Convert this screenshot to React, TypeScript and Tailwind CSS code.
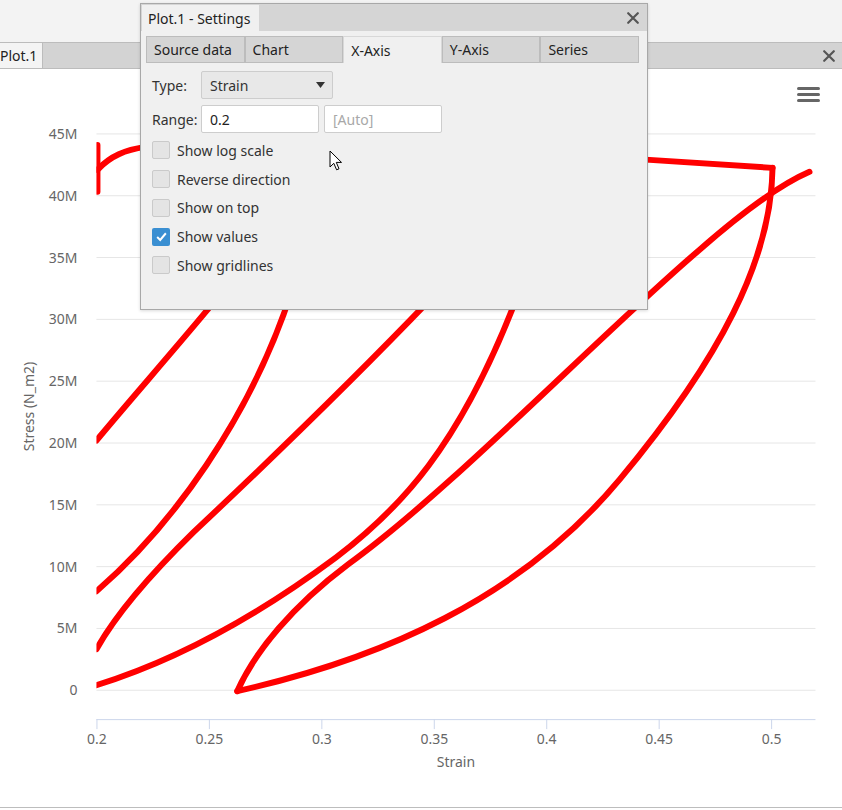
const curves = [
  // left-most lines rising out from the y axis
  "M96 441 C 130 400, 170 355, 214 302",
  "M96 592 C 170 528, 250 420, 292 290",
  "M96 650 C 110 625, 140 585, 193 533 C 260 470, 360 373, 430 300",
  "M96 686 C 180 660, 258 616, 336 558 C 398 511, 460 448, 518 295",
  // from the cusp up to the right end
  "M237 692 C 255 652, 292 607, 348 565 C 452 490, 600 335, 700 250 C 740 215, 780 185, 810 172",
  // top band and its return to the cusp
  "M97 170 C 110 156, 125 150, 145 147 C 300 138, 500 155, 650 160 L 773 168",
  "M773 168 C 772 260, 720 360, 620 480 C 520 600, 380 660, 237 692",
];

const yTicks = ["45M", "40M", "35M", "30M", "25M", "20M", "15M", "10M", "5M", "0"];
const xTicks = ["0.2", "0.25", "0.3", "0.35", "0.4", "0.45", "0.5"];

const Chart = () => (
  <svg className="block h-full w-full" viewBox="0 69 842 739">
    <defs>
      <clipPath id="plot">
        <rect x={96} y={69} width={730} height={651} />
      </clipPath>
    </defs>
    {yTicks.map((t, i) => {
      const y = 134 + i * 61.9;
      return (
        <g key={t}>
          <line x1={96} x2={816} y1={y} y2={y} stroke="#e6e6e6" strokeWidth={1} />
          <text x={77} y={y + 5} textAnchor="end" fontSize={14} fill="#666">
            {t}
          </text>
        </g>
      );
    })}
    <line x1={96} x2={816} y1={720.5} y2={720.5} stroke="#ccd6eb" strokeWidth={1} />
    {xTicks.map((t, i) => {
      const x = 96.5 + i * 112.6;
      return (
        <g key={t}>
          <line x1={x} x2={x} y1={720} y2={730} stroke="#ccd6eb" strokeWidth={1} />
          <text x={x} y={745} textAnchor="middle" fontSize={14} fill="#666">
            {t}
          </text>
        </g>
      );
    })}
    <text x={456} y={768} textAnchor="middle" fontSize={14} fill="#666">
      Strain
    </text>
    <text
      x={0}
      y={0}
      transform="translate(33 407) rotate(-90)"
      textAnchor="middle"
      fontSize={14}
      fill="#666"
    >
      Stress (N_m2)
    </text>
    <g clipPath="url(#plot)" fill="none" stroke="#f00" strokeWidth={6} strokeLinecap="round" strokeLinejoin="miter">
      <line x1={97} y1={145} x2={97} y2={192} />
      {curves.map((d, i) => (
        <path key={i} d={d} />
      ))}
    </g>
  </svg>
);

const Close = ({ size = 11 }: { size?: number }) => (
  <svg width={size} height={size} viewBox="0 0 10 10" className="block">
    <path d="M1 1 L9 9 M9 1 L1 9" stroke="#555" strokeWidth={1.8} strokeLinecap="round" />
  </svg>
);

const Check = ({ label, checked = false }: { label: string; checked?: boolean }) => (
  <div className="flex h-[28.75px] items-center gap-[7px]">
    {checked ? (
      <span className="flex h-[18px] w-[18px] items-center justify-center rounded-[2px] bg-[#3a8fd2]">
        <svg width="13" height="13" viewBox="0 0 12 12">
          <path d="M2 6.5 L4.8 9.2 L10 3" fill="none" stroke="#fff" strokeWidth={1.8} />
        </svg>
      </span>
    ) : (
      <span className="h-[18px] w-[18px] rounded-[2px] border border-[#cacaca] bg-[#e4e4e4]" />
    )}
    <span className="text-[14px] text-[#333]">{label}</span>
  </div>
);

const tabs = ["Source data", "Chart", "X-Axis", "Y-Axis", "Series"];

const SettingsDialog = () => (
  <div className="absolute left-[140px] top-[3px] flex h-[307px] w-[508px] flex-col border border-[#a8a8a8] bg-[#f0f0f0] shadow-[0_1px_3px_rgba(0,0,0,0.15)]">
    <div className="flex h-[27px] items-stretch bg-[#d5d5d5]">
      <div className="ml-px mt-px flex w-[117px] items-center bg-[#f0f0f0] pl-[6px] text-[14px] text-[#222]">
        Plot.1 - Settings
      </div>
      <button className="ml-auto mr-[8px] flex items-center">
        <Close size={12} />
      </button>
    </div>
    <div className="mx-[5px] mt-[5px] flex h-[27px]">
      {tabs.map((t) => (
        <div
          key={t}
          className={
            t === "X-Axis"
              ? "flex w-[98.6px] items-center border border-b-0 border-[#d8d8d8] bg-[#f0f0f0] pl-[7px] text-[14px] text-[#222]"
              : "flex w-[98.6px] items-center border border-[#bcbcbc] bg-[#d5d5d5] pl-[7px] text-[14px] text-[#222]"
          }
        >
          {t}
        </div>
      ))}
    </div>
    <div className="px-[11px] pt-[8px]">
      <div className="flex h-[28px] items-center">
        <span className="w-[49px] text-[14px] text-[#333]">Type:</span>
        <div className="flex h-[28px] w-[132px] items-center justify-between rounded-[2px] border border-[#cdcdcd] bg-[#e8e8e8] pl-[8px] pr-[7px] text-[14px] text-[#333]">
          Strain
          <svg width="9" height="6" viewBox="0 0 9 6">
            <path d="M0 0 H9 L4.5 6 Z" fill="#333" />
          </svg>
        </div>
      </div>
      <div className="mt-[6px] flex h-[28px] items-center">
        <span className="w-[49px] text-[14px] text-[#333]">Range:</span>
        <div className="flex h-[28px] w-[118px] items-center rounded-[2px] border border-[#cdcdcd] bg-white px-[8px] text-[14px] text-[#222]">
          0.2
        </div>
        <div className="ml-[5px] flex h-[28px] w-[118px] items-center rounded-[2px] border border-[#cdcdcd] bg-white px-[8px] text-[14px] text-[#a8a8a8]">
          [Auto]
        </div>
      </div>
      <div className="mt-[3px] flex flex-col">
        <Check label="Show log scale" />
        <Check label="Reverse direction" />
        <Check label="Show on top" />
        <Check label="Show values" checked />
        <Check label="Show gridlines" />
      </div>
    </div>
  </div>
);

const Cursor = () => (
  <svg className="absolute left-[329px] top-[150px]" width="14" height="22" viewBox="0 0 14 22">
    <path
      d="M1 1 L1 17 L4.8 13.3 L7.6 19.8 L10 18.8 L7.3 12.4 L12.5 12.4 Z"
      fill="#fff"
      stroke="#000"
      strokeWidth={1}
      strokeLinejoin="round"
    />
  </svg>
);

export default function App() {
  return (
    <div className="relative h-[810px] w-[842px] overflow-hidden bg-white font-['Noto_Sans',sans-serif]">
      <div className="h-[42px] bg-[#f3f3f3]" />
      <div className="flex h-[27px] items-stretch border-y border-[#bcbcbc] bg-[#d3d3d3]">
        <div className="flex w-[43px] items-center overflow-hidden border-r border-[#bcbcbc] bg-[#f4f4f4]">
          <span className="text-[14px] text-[#222]">Plot.1</span>
        </div>
        <button className="ml-auto mr-[7px] flex items-center">
          <Close size={12} />
        </button>
      </div>
      <div className="relative h-[739px] border-b border-[#bdbdbd]">
        <Chart />
        <button className="absolute right-[22px] top-[18px] flex flex-col gap-[3px]">
          <span className="h-[3px] w-[23px] rounded-full bg-[#666]" />
          <span className="h-[3px] w-[23px] rounded-full bg-[#666]" />
          <span className="h-[3px] w-[23px] rounded-full bg-[#666]" />
        </button>
      </div>
      <SettingsDialog />
      <Cursor />
    </div>
  );
}
